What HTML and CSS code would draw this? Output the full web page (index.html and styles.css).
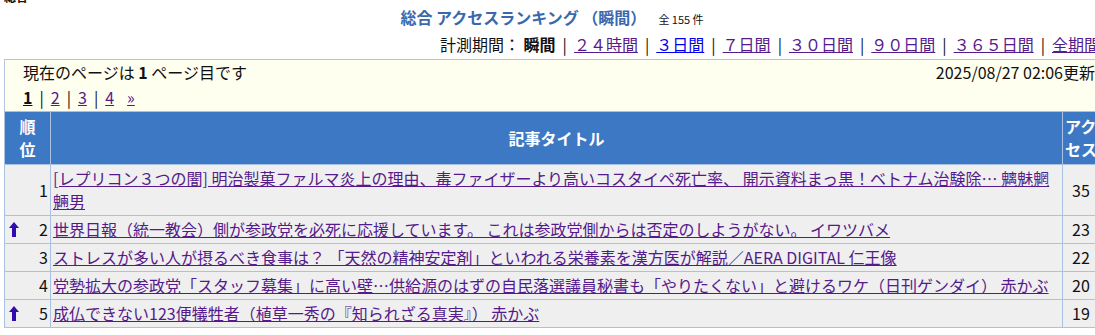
FILE: index.html
```html
<!DOCTYPE html>
<html lang="ja">
<head>
<meta charset="utf-8">
<title>総合 アクセスランキング</title>
<link rel="stylesheet" href="styles.css">
</head>
<body>
<div class="crumb">総合</div>
<div class="wrap">
  <h1 class="title">総合 アクセスランキング （瞬間）<span class="total">全 155 件</span></h1>
  <div class="period">計測期間： <b>瞬間</b><span class="sep">|</span><a class="v" href="#">２４時間</a><span class="sep">|</span><a class="u" href="#">３日間</a><span class="sep">|</span><a class="v" href="#">７日間</a><span class="sep">|</span><a class="v" href="#">３０日間</a><span class="sep">|</span><a class="v" href="#">９０日間</a><span class="sep">|</span><a class="v" href="#">３６５日間</a><span class="sep">|</span><a class="v" href="#">全期間</a></div>
  <div class="pagebox">
    <div class="pagerow">
      <div>現在のページは <b>1</b> ページ目です</div>
      <div class="updated">2025/08/27 02:06更新</div>
    </div>
    <div class="pager"><b class="cur">1</b><span class="sep2">|</span><a class="v" href="#">2</a><span class="sep2">|</span><a class="v" href="#">3</a><span class="sep2">|</span><a class="v" href="#">4</a><a class="v next" href="#">»</a></div>
  </div>
  <table class="rank">
    <thead>
      <tr>
        <th class="c-rank"><span class="stack">順位</span></th>
        <th class="c-title">記事タイトル</th>
        <th class="c-count">アクセス</th>
      </tr>
    </thead>
    <tbody>
      <tr>
        <td class="c-rank"><span class="num">1</span></td>
        <td class="c-title"><a class="v" href="#">[レプリコン３つの闇] 明治製菓ファルマ炎上の理由、毒ファイザーより高いコスタイペ死亡率、 開示資料まっ黒！ベトナム治験除… 魑魅魍魎男</a></td>
        <td class="c-count">35</td>
      </tr>
      <tr>
        <td class="c-rank"><svg class="up" width="10" height="15" viewBox="0 0 10 15"><path d="M5 0 L10 6 L7 6 L7 15 L3 15 L3 6 L0 6 Z" fill="#300cb0"/></svg><span class="num">2</span></td>
        <td class="c-title"><a class="v" href="#">世界日報（統一教会）側が参政党を必死に応援しています。 これは参政党側からは否定のしようがない。 イワツバメ</a></td>
        <td class="c-count">23</td>
      </tr>
      <tr>
        <td class="c-rank"><span class="num">3</span></td>
        <td class="c-title"><a class="v" href="#">ストレスが多い人が摂るべき食事は？ 「天然の精神安定剤」といわれる栄養素を漢方医が解説／AERA DIGITAL 仁王像</a></td>
        <td class="c-count">22</td>
      </tr>
      <tr>
        <td class="c-rank"><span class="num">4</span></td>
        <td class="c-title"><a class="v" href="#">党勢拡大の参政党「スタッフ募集」に高い壁…供給源のはずの自民落選議員秘書も「やりたくない」と避けるワケ（日刊ゲンダイ） 赤かぶ</a></td>
        <td class="c-count">20</td>
      </tr>
      <tr>
        <td class="c-rank"><svg class="up" width="10" height="15" viewBox="0 0 10 15"><path d="M5 0 L10 6 L7 6 L7 15 L3 15 L3 6 L0 6 Z" fill="#300cb0"/></svg><span class="num">5</span></td>
        <td class="c-title"><a class="v" href="#">成仏できない123便犠牲者（植草一秀の『知られざる真実』） 赤かぶ</a></td>
        <td class="c-count">19</td>
      </tr>
    </tbody>
  </table>
</div>
</body>
</html>
```

FILE: styles.css
```css
html, body {
  margin: 0;
  padding: 0;
  background: #ffffff;
}
body {
  font-family: "Noto Sans CJK JP", "Noto Sans", sans-serif;
  font-size: 16px;
  line-height: 23px;
  color: #111111;
  padding-left: 4px;
  overflow: hidden;
}
.crumb {
  font-size: 12px;
  line-height: 14px;
  font-weight: bold;
  margin-top: -10px;
  height: 14px;
  padding-left: 0;
}
.wrap {
  width: 1096px;
}
.title {
  margin: 2px 0 0 0;
  font-size: 16px;
  line-height: 23px;
  font-weight: bold;
  text-align: center;
  color: #3a68ae;
}
.total {
  font-size: 11px;
  font-weight: normal;
  color: #111111;
  margin-left: 12px;
}
.period {
  text-align: right;
  margin-top: 2px;
}
.sep {
  margin: 0 7px;
}
a.v { color: #551a8b; }
a.u { color: #0000ee; }
.pagebox {
  margin-top: 3px;
  border: 1px solid #b4c4e2;
  border-bottom: none;
  background: #fffff0;
  padding: 1px 4px 2px 18px;
}
.pagerow {
  display: flex;
  justify-content: space-between;
}
.pager {
  margin-top: 2px;
}
.cur {
  text-decoration: underline;
}
.sep2 {
  margin: 0 7px;
}
.next {
  margin-left: 13px;
}
.rank {
  width: 1096px;
  border-collapse: collapse;
}
.rank th, .rank td {
  border: 1px solid #a9c1e2;
  padding: 2px 2px;
  line-height: 23px;
}
.rank th {
  background: #3d78c4;
  color: #ffffff;
  font-weight: bold;
  padding: 3px 2px;
}
.rank td {
  background: #efefef;
}
.rank th.c-rank {
  width: 41px;
  text-align: center;
}
.stack {
  display: inline-block;
  width: 1em;
  vertical-align: top;
}
.rank td.c-rank {
  text-align: right;
  white-space: nowrap;
}
.up {
  float: left;
  margin: 4px 0 0 2px;
}
.rank th.c-title {
  text-align: center;
}
.rank td.c-title {
  text-align: left;
}
.rank th.c-count {
  width: 32px;
  text-align: left;
}
.rank td.c-count {
  text-align: center;
}
```
